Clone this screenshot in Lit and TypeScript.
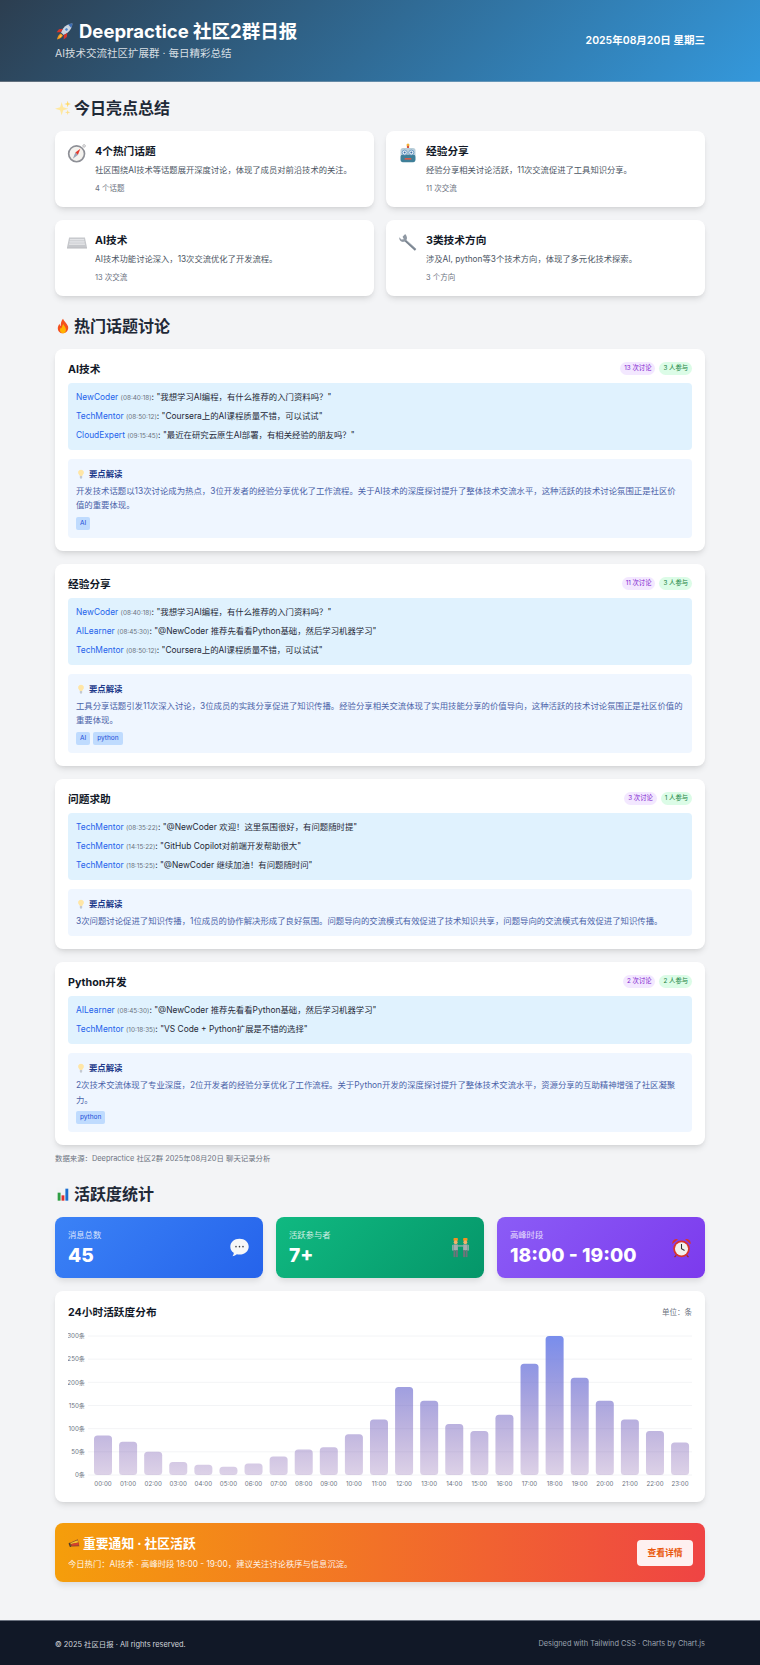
import { LitElement, html, css, svg } from "lit";
import { customElement } from "lit/decorators.js";

const icon = (size: number, body: unknown) => html`<svg class="ic" width=${size} height=${size} viewBox="0 0 24 24" aria-hidden="true">${body}</svg>`;

const E = {
  rocket: svg`<path d="M22 2c-5 .3-9 2.500-12 6.500L7.500 13l3.500 3.500 4.500-2.500C19.500 11 21.700 7 22 2z" fill="#c9d3de"/><path d="M22 2c-2 .1-3.800.5-5.500 1.300l4.200 4.200C21.500 5.800 21.900 3.900 22 2z" fill="#3f6fb5"/><circle cx="14.500" cy="9.500" r="2.200" fill="#4d86c9" stroke="#e8eef4" stroke-width=".8"/><path d="M10 8.500 5 9l-3 4 5.500-.2z" fill="#d8352a"/><path d="M15.500 14 15 19l-4 3 .2-5.500z" fill="#d8352a"/><path d="M7.500 14.500c-2.500 1-4 3.500-5 7.500 4-1 6.500-2.500 7.500-5z" fill="#f59a1f"/><path d="M7.500 16.500c-1 .7-1.800 2-2.300 3.300 1.300-.5 2.600-1.300 3.300-2.300z" fill="#ffe066"/>`,
  sparkles: svg`<path d="M10 3l2.300 7.700L20 13l-7.700 2.300L10 23l-2.300-7.700L0 13l7.700-2.300z" fill="#ffe8a0"/><path d="M19 1l1.100 3.900L24 6l-3.900 1.100L19 11l-1.100-3.900L14 6l3.900-1.100z" fill="#ffd966"/><path d="M19 14.500l.9 3.100 3.100.9-3.100.9-.9 3.100-.9-3.100-3.100-.9 3.100-.9z" fill="#ffe08a"/>`,
  compass: svg`<circle cx="20.500" cy="3.500" r="1.500" fill="none" stroke="#a8a8ac" stroke-width="1"/><circle cx="11.500" cy="13" r="10.500" fill="#8d8f96"/><circle cx="11.500" cy="13" r="8.500" fill="#f4f2ee"/><path d="M16 7l-3 7.500-3-3z" fill="#e23b2e"/><path d="M7 19l3-7.500 3 3z" fill="#9aa3b5"/>`,
  robot: svg`<circle cx="12" cy="2.500" r="1.800" fill="#f2b233"/><rect x="10.700" y="3.500" width="2.600" height="3" fill="#d8553f"/><rect x="3" y="6" width="18" height="11" rx="3" fill="#b9ced9"/><rect x="3" y="14" width="18" height="9" rx="2.500" fill="#3f7f98"/><circle cx="8" cy="11.500" r="3" fill="#eef4f7" stroke="#5e93c4"/><circle cx="16" cy="11.500" r="3" fill="#eef4f7" stroke="#5e93c4"/><circle cx="8" cy="11.500" r="1.200" fill="#3b6ea5"/><circle cx="16" cy="11.500" r="1.200" fill="#3b6ea5"/><path d="M8 18h8v2H8z" fill="#d65b4a"/>`,
  keyboard: svg`<path d="M2.500 6.500h19L24 18.500H0z" fill="#c6c8cc"/><path d="M0 18.500h24v1.200H0z" fill="#a9abb0"/><g fill="#e3e4e7"><rect x="3.500" y="8.300" width="17" height="1.800"/><rect x="3" y="11" width="18" height="1.800"/><rect x="2.500" y="13.700" width="19" height="1.800"/></g>`,
  wrench: svg`<path d="M8.500 8.500 22 20.500 20.200 22.500 6.800 10.200z" fill="#79838f"/><path d="M9 9 21.500 20.500" stroke="#aeb6be" stroke-width=".8"/><path d="M8.600 2.500 5.500 5.600l1.500 3-3 .4L1.700 6.300C1 9.500 3.500 12.300 6.800 11.800c2.800-.4 4.400-3 3.900-5.500-.3-1.500-1-2.900-2.100-3.800z" fill="#8f98a3"/>`,
  fire: svg`<path d="M12 1c1 4 6 6.500 7.500 11.500C21 18 17 23 12 23S3 18.500 4.500 13c.5-2 1.500-3.500 2.500-4.500 0 2 .7 3 1.700 3.500C8.300 8 9.500 4 12 1z" fill="#f4511e"/><path d="M12.500 9c.5 2.500 4 4.500 4 8.500 0 3-2 5.500-4.500 5.500s-4.700-2.200-4.500-5c.1-2 1.200-3.200 2-4 .2 1 .5 1.500 1 1.700C10.500 13 11 11 12.500 9z" fill="#ffb300"/>`,
  bulb: svg`<path d="M12 1.500a7 7 0 0 0-4.200 12.600c.9.800 1.200 1.700 1.200 2.900h6c0-1.200.3-2.100 1.200-2.900A7 7 0 0 0 12 1.500z" fill="#ffe6a6"/><rect x="9" y="17.500" width="6" height="3.500" rx="1" fill="#b6bac2"/><path d="M10.500 21.500h3l-.7 1.500h-1.600z" fill="#8c9099"/>`,
  chart: svg`<rect x="2" y="2" width="20" height="20" fill="#f2f3f5"/><rect x="4" y="10" width="4.300" height="12" fill="#2f9e44"/><rect x="9.800" y="14" width="4.300" height="8" fill="#e03131"/><rect x="15.600" y="4" width="4.300" height="18" fill="#1c6fd1"/>`,
  speech: svg`<path d="M12 2c6 0 10.500 4 10.500 9S18 20 12 20c-1 0-2-.1-3-.4-1.300 1.200-3 2-5 2.400 1-1.200 1.500-2.500 1.400-3.900C3 16.500 1.500 14 1.500 11 1.500 6 6 2 12 2z" fill="#f6f7f8"/><g fill="#3a3d44"><circle cx="8" cy="11" r=".9"/><circle cx="12" cy="11" r=".9"/><circle cx="16" cy="11" r=".9"/></g>`,
  workers: svg`<rect x="4" y="1" width="5" height="3.500" rx="1" fill="#f5921e"/><circle cx="6.500" cy="6" r="2.200" fill="#f2b16c"/><rect x="4" y="8.500" width="5" height="7" fill="#a4abaf"/><rect x="4" y="15" width="2.200" height="8" fill="#6d747a"/><rect x="6.800" y="15" width="2.200" height="8" fill="#6d747a"/><rect x="2.500" y="9" width="1.300" height="6.500" fill="#a4abaf"/><rect x="15" y="1" width="5" height="3.500" rx="1" fill="#f5921e"/><circle cx="17.500" cy="6" r="2.200" fill="#f2b16c"/><rect x="15" y="8.500" width="5" height="7" fill="#a4abaf"/><rect x="15" y="15" width="2.200" height="8" fill="#6d747a"/><rect x="17.800" y="15" width="2.200" height="8" fill="#6d747a"/><rect x="20.200" y="9" width="1.300" height="6.500" fill="#a4abaf"/><rect x="9" y="9.500" width="6" height="1.400" fill="#a4abaf"/>`,
  alarm: svg`<path d="M1.500 8A5 5 0 0 1 8 2.500z" fill="#d9352c"/><path d="M22.500 8A5 5 0 0 0 16 2.500z" fill="#d9352c"/><circle cx="12" cy="13.500" r="9.500" fill="#d9352c"/><circle cx="12" cy="13.500" r="7.500" fill="#f3f1ec"/><path d="M12 8v5.500l3.500 2" fill="none" stroke="#333" stroke-width="1.200"/><path d="M6 21l-2 2M18 21l2 2" stroke="#a32620" stroke-width="1.600"/>`,
  mega: svg`<path d="M3 11 18 4l3 13-15 .5z" fill="#8b4a2b"/><path d="M4 11.500 17.500 6 19 10 6 13z" fill="#f2c230"/><path d="M6 13 19 10l1 5-13 1z" fill="#d8402c"/><path d="M3 10l3 8-2.500.5L1 12z" fill="#4a3a2a"/>`,
};

const HIGHLIGHTS = [
  { i: E.compass, t: "4个热门话题", d: "社区围绕AI技术等话题展开深度讨论，体现了成员对前沿技术的关注。", m: "4 个话题" },
  { i: E.robot, t: "经验分享", d: "经验分享相关讨论活跃，11次交流促进了工具知识分享。", m: "11 次交流" },
  { i: E.keyboard, t: "AI技术", d: "AI技术功能讨论深入，13次交流优化了开发流程。", m: "13 次交流" },
  { i: E.wrench, t: "3类技术方向", d: "涉及AI, python等3个技术方向，体现了多元化技术探索。", m: "3 个方向" },
];

const TOPICS = [
  { t: "AI技术", a: "13 次讨论", b: "3 人参与", msgs: [
    ["NewCoder", "(08:40:18)", "\"我想学习AI编程，有什么推荐的入门资料吗？\""],
    ["TechMentor", "(08:50:12)", "\"Coursera上的AI课程质量不错，可以试试\""],
    ["CloudExpert", "(09:15:45)", "\"最近在研究云原生AI部署，有相关经验的朋友吗？\""],
  ], text: "开发技术话题以13次讨论成为热点，3位开发者的经验分享优化了工作流程。关于AI技术的深度探讨提升了整体技术交流水平，这种活跃的技术讨论氛围正是社区价值的重要体现。", tags: ["AI"] },
  { t: "经验分享", a: "11 次讨论", b: "3 人参与", msgs: [
    ["NewCoder", "(08:40:18)", "\"我想学习AI编程，有什么推荐的入门资料吗？\""],
    ["AILearner", "(08:45:30)", "\"@NewCoder 推荐先看看Python基础，然后学习机器学习\""],
    ["TechMentor", "(08:50:12)", "\"Coursera上的AI课程质量不错，可以试试\""],
  ], text: "工具分享话题引发11次深入讨论，3位成员的实践分享促进了知识传播。经验分享相关交流体现了实用技能分享的价值导向，这种活跃的技术讨论氛围正是社区价值的重要体现。", tags: ["AI", "python"] },
  { t: "问题求助", a: "3 次讨论", b: "1 人参与", msgs: [
    ["TechMentor", "(08:35:22)", "\"@NewCoder 欢迎！这里氛围很好，有问题随时提\""],
    ["TechMentor", "(14:15:22)", "\"GitHub Copilot对前端开发帮助很大\""],
    ["TechMentor", "(18:15:25)", "\"@NewCoder 继续加油！有问题随时问\""],
  ], text: "3次问题讨论促进了知识传播，1位成员的协作解决形成了良好氛围。问题导向的交流模式有效促进了技术知识共享，问题导向的交流模式有效促进了知识传播。", tags: [] },
  { t: "Python开发", a: "2 次讨论", b: "2 人参与", msgs: [
    ["AILearner", "(08:45:30)", "\"@NewCoder 推荐先看看Python基础，然后学习机器学习\""],
    ["TechMentor", "(10:18:35)", "\"VS Code + Python扩展是不错的选择\""],
  ], text: "2次技术交流体现了专业深度，2位开发者的经验分享优化了工作流程。关于Python开发的深度探讨提升了整体技术交流水平，资源分享的互助精神增强了社区凝聚力。", tags: ["python"] },
];

const VALUES = [85, 72, 50, 28, 22, 18, 25, 40, 55, 60, 88, 120, 190, 160, 110, 95, 130, 240, 300, 210, 160, 120, 95, 70];

@customElement("app-root")
export class AppRoot extends LitElement {
  static styles = css`
    :host { display: block; background: #f3f4f6; font-family: Inter, "Noto Sans CJK SC", sans-serif; color: #111827; }
    * { box-sizing: border-box; }
    .ic { display: block; flex: none; }
    header { height: 82px; background: linear-gradient(135deg, #2c3e50, #3498db); border-bottom: 1px solid rgba(255,255,255,.25); padding: 0 55px; display: flex; justify-content: space-between; align-items: center; color: #fff; }
    .h-title { display: flex; align-items: center; gap: 5px; font-size: 18.500px; line-height: 26px; font-weight: 700; margin-top: -1px; }
    .h-sub { font-size: 10.500px; line-height: 16px; margin-top: 2px; color: rgba(255,255,255,.82); }
    .h-date { font-size: 10.500px; font-weight: 600; line-height: 16px; }
    main { padding: 14px 55px 38px; }
    h2 { display: flex; align-items: center; gap: 3px; margin: 0 0 11px; font-size: 16px; line-height: 24px; font-weight: 700; color: #1f2937; }
    .grid2 { display: grid; grid-template-columns: 1fr 1fr; gap: 13px 12px; margin-bottom: 18px; }
    .card { background: #fff; border-radius: 8px; box-shadow: 0 4px 6px -1px rgba(0,0,0,.1), 0 2px 4px -2px rgba(0,0,0,.08); }
    .hl { height: 76px; padding: 12px; display: flex; gap: 8px; }
    .hl-t { font-size: 10.700px; line-height: 16px; font-weight: 700; margin-top: 1px; }
    .hl-d { font-size: 8.300px; line-height: 14px; color: #4b5563; margin-top: 3px; white-space: nowrap; }
    .hl-m { font-size: 7.500px; line-height: 12px; color: #6b7280; margin-top: 6px; }
    .topic { padding: 13px; margin-bottom: 13px; }
    .topic-h { display: flex; justify-content: space-between; align-items: flex-start; height: 21px; }
    .topic-t { font-size: 10.700px; font-weight: 700; line-height: 16px; }
    .badges { display: flex; gap: 4px; }
    .badge { height: 13px; line-height: 13px; padding: 0 4px; border-radius: 7px; font-size: 6.300px; }
    .purple { background: #f3e8ff; color: #7e22ce; }
    .green { background: #dcfce7; color: #15803d; }
    .msgs { background: #e0f2fe; border-radius: 4px; padding: 5px 8px; font-size: 8.400px; line-height: 19px; color: #1f2937; margin-bottom: 9px; }
    .name { color: #2563eb; }
    .time { color: #6b7280; font-size: 6.400px; line-height: 1; }
    .ins { background: #eff6ff; border-radius: 4px; padding: 8px; }
    .ins-t { display: flex; align-items: center; gap: 3px; font-size: 8.400px; line-height: 14px; font-weight: 700; color: #1e3a8a; }
    .ins-d { font-size: 8.400px; line-height: 14.250px; color: #4a62a8; margin-top: 3px; }
    .tags { display: flex; gap: 3px; margin-top: 4.500px; }
    .tag { background: #bfdbfe; color: #1d4ed8; border-radius: 2px; padding: 0 4px; font-size: 6.500px; line-height: 13px; }
    .source { font-size: 7.400px; line-height: 12px; color: #6b7280; margin: -5px 0 17px; }
    .stats { display: grid; grid-template-columns: repeat(3, 1fr); gap: 13px; margin-bottom: 13px; }
    .stat { height: 61px; border-radius: 8px; padding: 13px; color: #fff; position: relative; box-shadow: 0 4px 6px -1px rgba(0,0,0,.1); display: flex; justify-content: space-between; align-items: center; }
    .s1 { background: linear-gradient(135deg, #3b82f6, #2563eb); }
    .s2 { background: linear-gradient(135deg, #10b981, #059669); }
    .s3 { background: linear-gradient(135deg, #8b5cf6, #7c3aed); }
    .s-l { font-size: 8.300px; line-height: 12px; opacity: .8; }
    .s-v { font-size: 19.200px; line-height: 24px; font-weight: 800; margin-top: 2px; }
    .chart { padding: 13px; height: 211px; margin-bottom: 21px; }
    .chart-h { display: flex; justify-content: space-between; align-items: center; height: 14px; margin-bottom: 12px; }
    .chart-t { font-size: 10.700px; font-weight: 700; }
    .chart-u { font-size: 7.500px; color: #6b7280; }
    .chart svg { display: block; }
    .chart text { font-family: Inter, "Noto Sans CJK SC", sans-serif; font-size: 6.200px; fill: #6b7280; }
    .alert { height: 59px; border-radius: 8px; background: linear-gradient(90deg, #f59e0b, #ef4444); color: #fff; padding: 0 12px 0 13px; display: flex; justify-content: space-between; align-items: center; box-shadow: 0 4px 6px -1px rgba(0,0,0,.1); }
    .al-t { display: flex; align-items: center; gap: 2px; font-size: 12.800px; line-height: 18px; font-weight: 700; }
    .al-d { font-size: 8.300px; line-height: 14px; opacity: .9; margin-top: 4px; }
    .btn { width: 56px; height: 26px; background: rgba(255,255,255,.92); border-radius: 4px; color: #ea580c; font-size: 8.800px; font-weight: 700; display: flex; align-items: center; justify-content: center; }
    footer { height: 45px; background: #111827; border-top: 1px solid #6b7280; padding: 0 55px; display: flex; justify-content: space-between; align-items: center; font-size: 7.400px; color: #d1d5db; }
    .f-r { color: #9ca3af; }
  `;

  private chart() {
    const X0 = 35, STEP = 25.09, BW = 18, Y0 = 145, K = 139 / 300;
    return html`<svg width="624" height="160" viewBox="0 0 624 160">
      <defs><linearGradient id="barg" gradientUnits="userSpaceOnUse" x1="0" y1="6" x2="0" y2="145">
        <stop offset="0" stop-color="#667eea" stop-opacity=".88"></stop>
        <stop offset="1" stop-color="#764ba2" stop-opacity=".25"></stop>
      </linearGradient></defs>
      ${[0, 50, 100, 150, 200, 250, 300].map((v) => {
        const y = Y0 - v * K;
        return svg`<line x1="20" x2="624" y1=${y} y2=${y} stroke="#f3f4f6" stroke-width="1"></line><text x="17" y=${y + 2.2} text-anchor="end">${v}条</text>`;
      })}
      ${VALUES.map((v, i) => {
        const cx = X0 + i * STEP, h = v * K;
        return svg`<rect x=${cx - BW / 2} y=${Y0 - h} width=${BW} height=${h} rx="3.500" fill="url(#barg)"></rect>
          <text x=${cx} y="156" text-anchor="middle">${String(i).padStart(2, "0")}:00</text>`;
      })}
    </svg>`;
  }

  render() {
    return html`
      <header>
        <div>
          <div class="h-title">${icon(19, E.rocket)}<span>Deepractice 社区2群日报</span></div>
          <div class="h-sub">AI技术交流社区扩展群 · 每日精彩总结</div>
        </div>
        <div class="h-date">2025年08月20日 星期三</div>
      </header>
      <main>
        <h2>${icon(16, E.sparkles)}<span>今日亮点总结</span></h2>
        <div class="grid2">
          ${HIGHLIGHTS.map((h) => html`<div class="card hl">${icon(20, h.i)}<div>
            <div class="hl-t">${h.t}</div><div class="hl-d">${h.d}</div><div class="hl-m">${h.m}</div>
          </div></div>`)}
        </div>
        <h2>${icon(16, E.fire)}<span>热门话题讨论</span></h2>
        ${TOPICS.map((t) => html`<div class="card topic">
          <div class="topic-h"><div class="topic-t">${t.t}</div><div class="badges"><span class="badge purple">${t.a}</span><span class="badge green">${t.b}</span></div></div>
          <div class="msgs">${t.msgs.map((m) => html`<div><span class="name">${m[0]}</span> <span class="time">${m[1]}</span>: ${m[2]}</div>`)}</div>
          <div class="ins">
            <div class="ins-t">${icon(10, E.bulb)}<span>要点解读</span></div>
            <div class="ins-d">${t.text}</div>
            ${t.tags.length ? html`<div class="tags">${t.tags.map((g) => html`<span class="tag">${g}</span>`)}</div>` : ""}
          </div>
        </div>`)}
        <div class="source">数据来源：Deepractice 社区2群 2025年08月20日 聊天记录分析</div>
        <h2>${icon(16, E.chart)}<span>活跃度统计</span></h2>
        <div class="stats">
          <div class="stat s1"><div><div class="s-l">消息总数</div><div class="s-v">45</div></div>${icon(21, E.speech)}</div>
          <div class="stat s2"><div><div class="s-l">活跃参与者</div><div class="s-v">7+</div></div>${icon(21, E.workers)}</div>
          <div class="stat s3"><div><div class="s-l">高峰时段</div><div class="s-v">18:00 - 19:00</div></div>${icon(21, E.alarm)}</div>
        </div>
        <div class="card chart">
          <div class="chart-h"><div class="chart-t">24小时活跃度分布</div><div class="chart-u">单位：条</div></div>
          ${this.chart()}
        </div>
        <div class="alert">
          <div>
            <div class="al-t">${icon(13, E.mega)}<span>重要通知 · 社区活跃</span></div>
            <div class="al-d">今日热门：AI技术 · 高峰时段 18:00 - 19:00，建议关注讨论秩序与信息沉淀。</div>
          </div>
          <div class="btn">查看详情</div>
        </div>
      </main>
      <footer><div>© 2025 社区日报 · All rights reserved.</div><div class="f-r">Designed with Tailwind CSS · Charts by Chart.js</div></footer>
    `;
  }
}
